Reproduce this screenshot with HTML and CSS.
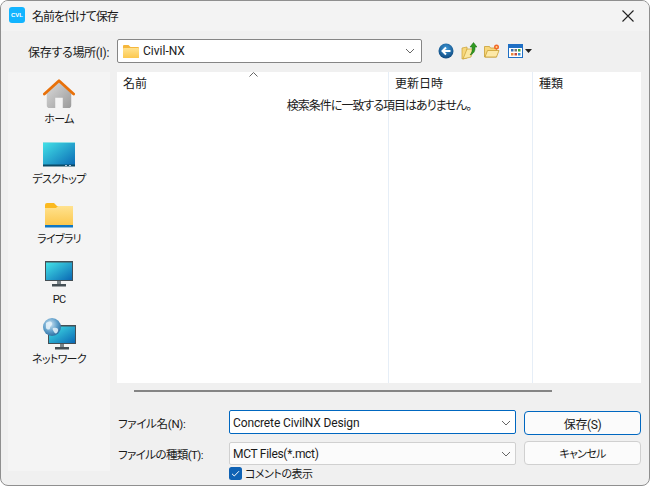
FILE: index.html
```html
<!DOCTYPE html>
<html lang="ja">
<head>
<meta charset="utf-8">
<title>名前を付けて保存</title>
<link rel="stylesheet" href="styles.css">
</head>
<body>
<svg class="defs" width="0" height="0">
  <defs>
    <linearGradient id="screen" x1="0" y1="0" x2="1" y2="1"><stop offset="0" stop-color="#43e3e8"/><stop offset="1" stop-color="#0a68b4"/></linearGradient>
    <linearGradient id="fold" x1="0" y1="0" x2="0" y2="1"><stop offset="0" stop-color="#ffe28f"/><stop offset="1" stop-color="#fcc84e"/></linearGradient>
    <linearGradient id="house" x1="0" y1="0" x2="1" y2="1"><stop offset="0" stop-color="#dcdcdc"/><stop offset="1" stop-color="#9a9a9a"/></linearGradient>
    <radialGradient id="globe" cx=".4" cy=".35" r=".75"><stop offset="0" stop-color="#cfe6f5"/><stop offset=".55" stop-color="#5c9cc8"/><stop offset="1" stop-color="#215f92"/></radialGradient>
    <radialGradient id="back" cx=".5" cy=".35" r=".7"><stop offset="0" stop-color="#3f9bdb"/><stop offset="1" stop-color="#0b4277"/></radialGradient>
  </defs>
</svg>
<div class="window">
  <header class="titlebar">
    <div class="app-logo">CVL</div>
    <div class="title">名前を付けて保存</div>
    <svg class="close" width="12" height="12" viewBox="0 0 12 12"><path d="M.5.5l11 11M11.5.5l-11 11" stroke="#222" stroke-width="1.1" fill="none"/></svg>
  </header>
  <div class="content">
    <div class="location-row">
      <div class="location-label">保存する場所(I):</div>
      <div class="location-combo">
        <svg class="small-folder" width="16" height="14" viewBox="0 0 16 14"><path d="M0 2a1 1 0 0 1 1-1h4.500l2 2H15a1 1 0 0 1 1 1v9a1 1 0 0 1-1 1H1a1 1 0 0 1-1-1z" fill="#f6b73c"/><rect y="4" width="16" height="10" rx="1" fill="url(#fold)"/></svg>
        <span class="location-value">Civil-NX</span>
        <svg class="chev loc-chev" width="10" height="6" viewBox="0 0 10 6"><path d="M1 1l4 4 4-4" stroke="#666" fill="none"/></svg>
      </div>
      <div class="toolbar">
        <svg width="16" height="16" viewBox="0 0 16 16"><circle cx="8" cy="8" r="7.500" fill="url(#back)"/><path d="M12.500 8H5M8 4.500L4.500 8 8 11.500" stroke="#fff" stroke-width="2" fill="none"/></svg>
        <svg width="16" height="18" viewBox="0 0 16 18"><path d="M1 6l5-1v11l-5 1z" fill="#f7d77c" stroke="#c9a032" stroke-width=".7"/><path d="M6 7h6l-2 8-8 2z" fill="#fbe7a0" stroke="#c9a032" stroke-width=".7"/><path d="M9 13c2-2 2.500-5 2-8H9l3.500-4.500L16 5h-2c.5 4-1.500 7-5 8z" fill="#2f9a22" stroke="#1c6d12" stroke-width=".5"/></svg>
        <svg width="16" height="14" viewBox="0 0 16 14"><path d="M.5 2.500h5l1 1.500h6v9H.5z" fill="#f7d77c" stroke="#c9a032" stroke-width=".8"/><path d="M1 13l2.500-6.500H15L12.500 13z" fill="#fde9a8" stroke="#c9a032" stroke-width=".8"/><circle cx="12.500" cy="3" r="2.500" fill="#f2672a"/><circle cx="12.500" cy="3" r="1" fill="#ffd98a"/></svg>
        <div class="view-btn">
          <svg width="15" height="14" viewBox="0 0 15 14"><rect x=".5" y=".5" width="14" height="13" fill="#fff" stroke="#1f6fc4"/><rect x="1" y="1" width="13" height="3" fill="#1f6fc4"/><rect x="3" y="5" width="2.500" height="2.500" fill="#3a6fb0"/><rect x="6.500" y="5" width="2.500" height="2.500" fill="#777"/><rect x="10" y="5" width="2.500" height="2.500" fill="#3aa53a"/><rect x="3" y="9" width="2.500" height="2.500" fill="#e8863a"/><rect x="6.500" y="9" width="2.500" height="2.500" fill="#c8493a"/><rect x="10" y="9" width="2.500" height="2.500" fill="#3a8fd0"/></svg>
          <svg width="7" height="4" viewBox="0 0 7 4"><path d="M0 0h7L3.500 4z" fill="#222"/></svg>
        </div>
      </div>
    </div>
    <div class="main-row">
      <nav class="sidebar">
        <div class="place place-home">
          <svg width="32" height="32" viewBox="0 0 34 32"><path d="M4 15L17 3l13 12v13a3 3 0 0 1-3 3h-6V20h-8v11H7a3 3 0 0 1-3-3z" fill="url(#house)"/><path d="M1.500 16L17 2l15.500 14" fill="none" stroke="#e8710a" stroke-width="3" stroke-linecap="round" stroke-linejoin="round"/></svg>
          <span class="place-label">ホーム</span>
        </div>
        <div class="place">
          <svg width="32" height="25" viewBox="0 0 32 25"><rect y="0" width="32" height="24" rx="1" fill="url(#screen)"/><rect y="0" width="32" height="1" fill="#8fdfe6"/><rect y="22.500" width="32" height="2" fill="#0b4a66"/><rect x="22" y="23" width="2" height="1" fill="#bcd"/><rect x="26" y="23" width="2" height="1" fill="#bcd"/></svg>
          <span class="place-label">デスクトップ</span>
        </div>
        <div class="place place-lib">
          <svg width="28" height="25" viewBox="0 0 28 25"><path d="M0 2a2 2 0 0 1 2-2h7l3 3h14a2 2 0 0 1 2 2v18H0z" fill="#fbb91f"/><path d="M0 5h11l2-2h15v19H0z" fill="url(#fold)"/><rect y="22" width="28" height="2.500" fill="#0f77c4"/></svg>
          <span class="place-label">ライブラリ</span>
        </div>
        <div class="place">
          <svg width="28" height="26" viewBox="0 0 28 26"><rect x="0" y="0" width="28" height="20" fill="#444f55"/><rect x="1" y="1.500" width="26" height="17.500" fill="url(#screen)"/><rect x="12" y="20" width="4" height="3" fill="#7b858a"/><rect x="7" y="23" width="14" height="2.500" fill="#444f55"/></svg>
          <span class="place-label">PC</span>
        </div>
        <div class="place place-net">
          <svg width="33" height="32" viewBox="0 0 33 32"><rect x="5" y="7" width="28" height="19" fill="#444f55"/><rect x="6" y="8.500" width="26" height="16.500" fill="url(#screen)"/><rect x="17" y="26" width="4" height="3" fill="#7b858a"/><rect x="12" y="29" width="14" height="2.500" fill="#444f55"/><circle cx="9" cy="9" r="9" fill="url(#globe)"/><path d="M3 5c3-2 5-2 6 0s-2 3-2 5-3 2-4 0zM10 10c3-1 6 0 5 3s-3 3-4 1-2-3-1-4z" fill="#e8f3fa" opacity=".85"/></svg>
          <span class="place-label">ネットワーク</span>
        </div>
      </nav>
      <div class="right-col">
        <div class="file-list">
          <div class="col col-name"><span class="col-head">名前</span>
            <svg class="sort-arrow" width="9" height="5" viewBox="0 0 9 5"><path d="M.5 4.500l4-4 4 4" stroke="#666" fill="none"/></svg>
          </div>
          <div class="col col-date"><span class="col-head">更新日時</span></div>
          <div class="col col-type"><span class="col-head">種類</span></div>
          <div class="empty-msg">検索条件に一致する項目はありません。</div>
        </div>
        <div class="hscroll"><div class="hthumb"></div></div>
        <div class="form">
          <label class="form-label">ファイル名(N):</label>
          <div class="field field-active"><span class="field-text">Concrete CivilNX Design</span><svg class="chev" width="10" height="6" viewBox="0 0 10 6"><path d="M1 1l4 4 4-4" stroke="#666" fill="none"/></svg></div>
          <button class="btn btn-default">保存(S)</button>
          <label class="form-label form-label-type">ファイルの種類(T):</label>
          <div class="field field-select"><span class="field-text-type">MCT Files(*.mct)</span><svg class="chev" width="10" height="6" viewBox="0 0 10 6"><path d="M1 1l4 4 4-4" stroke="#666" fill="none"/></svg></div>
          <button class="btn btn-cancel">キャンセル</button>
          <div class="check-row">
            <svg width="13" height="13" viewBox="0 0 13 13"><rect width="13" height="13" rx="2.500" fill="#0f62b4"/><path d="M3 6.800l2.300 2.200L10 4.200" stroke="#fff" fill="none"/></svg>
            <span class="check-label">コメントの表示</span>
          </div>
        </div>
      </div>
    </div>
  </div>
</div>
</body>
</html>
```

FILE: styles.css
```css
* { box-sizing: border-box; }
html, body { margin: 0; padding: 0; }
body {
  width: 650px;
  height: 486px;
  background: #fff;
  overflow: hidden;
  font-family: Roboto, "Noto Sans CJK JP", sans-serif;
  font-feature-settings: "palt";
  font-size: 12px;
  color: #1a1a1a;
}
.defs { display: block; height: 0; }
.window {
  width: 650px;
  height: 486px;
  display: flex;
  flex-direction: column;
  background: #f0f0f0;
  border: 1px solid #8f8f8f;
  border-radius: 8px;
  overflow: hidden;
}
.titlebar {
  height: 30px;
  flex: none;
  display: flex;
  align-items: center;
  background: #f3f3f3;
  padding: 0 15px 1px 8px;
}
.app-logo {
  width: 16px;
  height: 16px;
  border-radius: 3px;
  background: #12b4ff;
  color: #fff;
  font: 700 6px/16px "Liberation Sans", sans-serif;
  text-align: center;
  margin-top: -1px;
}
.title { margin-left: 7px; flex: 1; letter-spacing: -1px; }
.content { flex: 1; display: flex; flex-direction: column; padding: 8px 8px 14px 7px; min-height: 0; }
.location-row { display: flex; align-items: center; height: 24px; flex: none; }
.location-label { width: 109px; padding-left: 20px; white-space: nowrap; flex: none; letter-spacing: -.3px; }
.location-combo {
  width: 305px;
  height: 24px;
  flex: none;
  display: flex;
  align-items: center;
  background: #fff;
  border: 1px solid #858585;
  border-radius: 2px;
  padding: 0 6px 0 5px;
}
.location-value { margin-left: 4px; flex: 1; }
.toolbar { display: flex; align-items: center; gap: 7px; margin-left: 16px; }
.view-btn { display: flex; align-items: center; gap: 2px; margin-left: 1px; }
.main-row { flex: 1; display: flex; margin-top: 9px; min-height: 0; }
.sidebar {
  width: 102px;
  flex: none;
  background: #f4f4f4;
  display: flex;
  flex-direction: column;
  align-items: center;
}
.place { height: 60px; flex: none; display: flex; flex-direction: column; align-items: center; justify-content: flex-end; width: 100%; padding-bottom: 4px; }
.place-home { height: 59px; }
.place-label { line-height: 14px; margin-top: 6px; white-space: nowrap; font-size: 11px; letter-spacing: -.7px; }
.place-home .place-label, .place-net .place-label { margin-top: 3px; }
.place-lib .place-label { margin-top: 5px; }
.right-col { flex: 1; display: flex; flex-direction: column; margin-left: 7px; min-width: 0; }
.file-list {
  position: relative;
  height: 311px;
  width: 524px;
  flex: none;
  background: #fff;
  display: flex;
}
.col { height: 100%; padding: 5px 0 0 6px; position: relative; flex: none; border-right: 1px solid #e6eef7; }
.col-name { width: 272px; }
.col-date { width: 144px; }
.col-type { flex: 1; border-right: 0; }
.col-head { line-height: 14px; display: block; }
.sort-arrow { position: absolute; left: 132px; top: 0; }
.empty-msg { position: absolute; top: 27px; left: 0; right: 0; text-align: center; line-height: 14px; letter-spacing: -1px; }
.hscroll { height: 15px; flex: none; padding: 7px 0 0 17px; }
.hthumb { width: 418px; height: 2px; background: #858585; }
.form {
  display: grid;
  grid-template-columns: 112px 287px 125px;
  margin-top: 12px;
  align-items: center;
}
.form-label { padding-left: 1px; white-space: nowrap; font-size: 11.500px; letter-spacing: -.3px; }
.form-label-type { margin-top: 7px; letter-spacing: -.6px; }
.field {
  height: 24px;
  display: flex;
  align-items: center;
  justify-content: space-between;
  padding: 0 4px 0 3px;
  border-radius: 2px;
  background: #fff;
  width: 287px;
}
.field-active { border: 1px solid #0067c0; align-self: start; padding-top: 1px; }
.field-text { letter-spacing: -.13px; }
.field-text-type { letter-spacing: -.3px; }
.field-select { background: #fbfbfb; border: 1px solid #d0d0d0; height: 23px; margin-top: 7px; }
.btn {
  width: 117px;
  height: 24px;
  font: inherit;
  font-feature-settings: "palt";
  color: inherit;
  background: #fbfbfb;
  border: 1px solid #d0d0d0;
  border-radius: 4px;
  padding: 0;
  margin-left: 8px;
}
.btn-default { border-color: #0067c0; margin-top: 1px; letter-spacing: -.4px; }
.btn-cancel { margin-top: 6px; font-size: 11px; letter-spacing: -.7px; }
.check-row { grid-column: 2 / 4; display: flex; align-items: center; gap: 3px; height: 15px; margin-top: 1px; }
.check-label { font-size: 11px; letter-spacing: -.5px; margin-top: -2px; }
.chev { flex: none; }
```
